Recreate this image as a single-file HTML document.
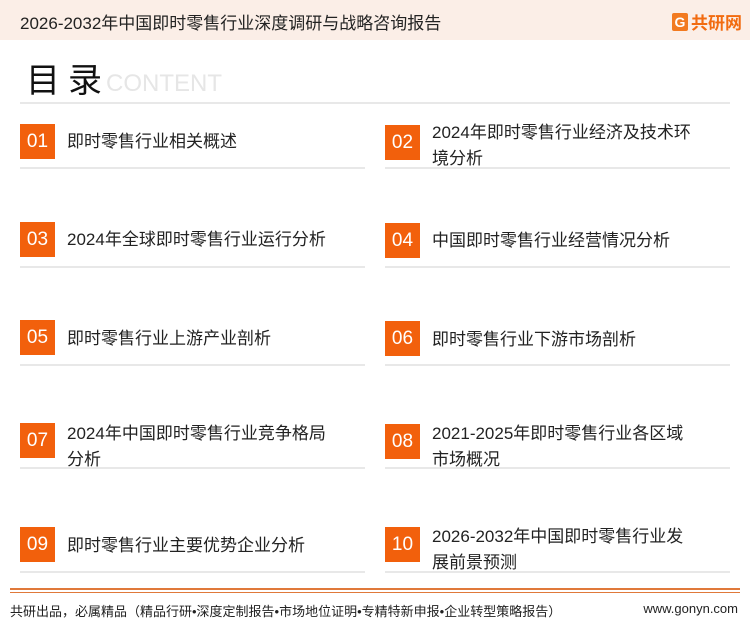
<!DOCTYPE html>
<html><head><meta charset="utf-8"><style>
*{margin:0;padding:0;box-sizing:border-box}
body{width:750px;height:622px;position:relative;background:#fff;font-family:"Liberation Sans","Noto Sans CJK SC",sans-serif;overflow:hidden;color:#222}
.hdr{position:absolute;left:0;top:0;width:750px;height:40px;background:#fbeee7}
.hdr .t{position:absolute;left:20px;top:9px;font-size:17px;color:#222}
.logo{position:absolute;right:8px;top:9px;font-size:17px;font-weight:bold;color:#f26b10;display:flex;align-items:center}
.logo i{display:inline-block;width:16px;height:18px;background:#f27a20;margin-right:3px;border-radius:2px;color:#fff;font-style:normal;font-size:14px;text-align:center;line-height:18px}
.ttl{position:absolute;left:26px;top:59px;font-size:34px;letter-spacing:8px;color:#111;line-height:44px}
.ct{position:absolute;left:106px;top:70px;font-size:24px;color:#e6e6e6}
.ln{position:absolute;height:2px;background:#e8e8e8}
.box{position:absolute;width:35px;height:35px;background:#f2600c;color:#fff;font-size:19px;text-align:center;line-height:35px}
.tx{position:absolute;font-size:17px;line-height:26px;color:#222;width:268px}
.ft1{position:absolute;left:10px;top:588px;width:730px;height:2px;background:#e0793a}
.ft2{position:absolute;left:10px;top:592px;width:730px;height:1px;background:#e0793a}
.fl{position:absolute;left:10px;top:601px;font-size:13px}
.fr{position:absolute;right:12px;top:601px;font-size:13px}
</style></head><body>
<div class="hdr"><div class="t">2026-2032年中国即时零售行业深度调研与战略咨询报告</div><div class="logo"><i>G</i>共研网</div></div>
<div class="ttl">目录</div><div class="ct">CONTENT</div>
<div class="ln" style="left:20px;top:102px;width:710px"></div>

<div class="box" style="left:20px;top:124px">01</div><div class="tx" style="left:67px;top:129px">即时零售行业相关概述</div>
<div class="box" style="left:385px;top:125px">02</div><div class="tx" style="left:432px;top:120px">2024年即时零售行业经济及技术环境分析</div>
<div class="ln" style="left:20px;top:167px;width:345px"></div><div class="ln" style="left:385px;top:167px;width:345px"></div>

<div class="box" style="left:20px;top:222px">03</div><div class="tx" style="left:67px;top:227px;width:290px">2024年全球即时零售行业运行分析</div>
<div class="box" style="left:385px;top:223px">04</div><div class="tx" style="left:432px;top:228px;width:290px">中国即时零售行业经营情况分析</div>
<div class="ln" style="left:20px;top:266px;width:345px"></div><div class="ln" style="left:385px;top:266px;width:345px"></div>

<div class="box" style="left:20px;top:320px">05</div><div class="tx" style="left:67px;top:326px">即时零售行业上游产业剖析</div>
<div class="box" style="left:385px;top:321px">06</div><div class="tx" style="left:432px;top:327px">即时零售行业下游市场剖析</div>
<div class="ln" style="left:20px;top:364px;width:345px"></div><div class="ln" style="left:385px;top:364px;width:345px"></div>

<div class="box" style="left:20px;top:423px">07</div><div class="tx" style="left:67px;top:421px">2024年中国即时零售行业竞争格局分析</div>
<div class="box" style="left:385px;top:424px">08</div><div class="tx" style="left:432px;top:421px;width:258px">2021-2025年即时零售行业各区域市场概况</div>
<div class="ln" style="left:20px;top:467px;width:345px"></div><div class="ln" style="left:385px;top:467px;width:345px"></div>

<div class="box" style="left:20px;top:527px">09</div><div class="tx" style="left:67px;top:533px;width:290px">即时零售行业主要优势企业分析</div>
<div class="box" style="left:385px;top:527px">10</div><div class="tx" style="left:432px;top:524px;width:262px">2026-2032年中国即时零售行业发展前景预测</div>
<div class="ln" style="left:20px;top:571px;width:345px"></div><div class="ln" style="left:385px;top:571px;width:345px"></div>

<div class="ft1"></div><div class="ft2"></div>
<div class="fl">共研出品，必属精品（精品行研•深度定制报告•市场地位证明•专精特新申报•企业转型策略报告）</div>
<div class="fr">www.gonyn.com</div>
</body></html>
